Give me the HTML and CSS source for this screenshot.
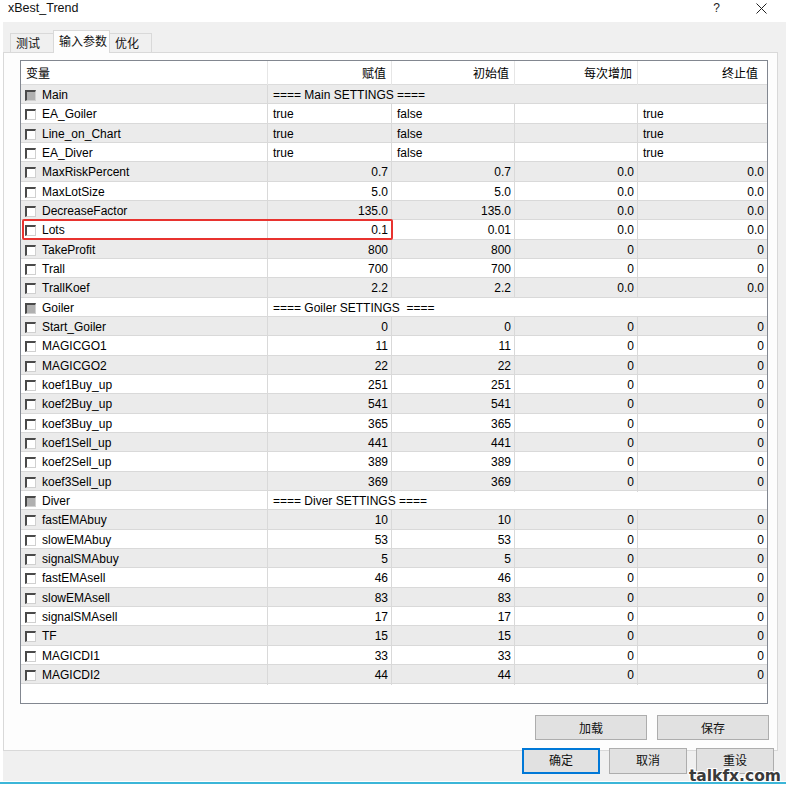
FILE: index.html
```html
<!DOCTYPE html>
<html lang="zh">
<head>
<meta charset="utf-8">
<title>xBest_Trend</title>
<link rel="stylesheet" href="styles.css">
</head>
<body>
<div class="window">
  <div class="titlebar">
    <span class="title">xBest_Trend</span>
    <span class="help">?</span>
    <svg class="close" width="11" height="11" viewBox="0 0 11 11"><path d="M0.5 0.5L10.5 10.5M10.5 0.5L0.5 10.5" stroke="#222" stroke-width="1" fill="none"/></svg>
  </div>
  <div class="client">
    <div class="tabs">
      <div class="tab t1">测试</div>
      <div class="tab active">输入参数</div>
      <div class="tab t3">优化</div>
    </div>
    <div class="panel">
      <div class="table">
        <div class="row head">
          <div class="c l">变量</div><div class="c">赋值</div><div class="c">初始值</div><div class="c">每次增加</div><div class="c last">终止值</div>
        </div>
        <div class="row g group"><div class="c n"><span class="cb"></span>Main</div><div class="c l span">==== Main SETTINGS ====</div></div>
        <div class="row"><div class="c n"><span class="cb"></span>EA_Goiler</div><div class="c l">true</div><div class="c l">false</div><div class="c"></div><div class="c l">true</div></div>
        <div class="row g"><div class="c n"><span class="cb"></span>Line_on_Chart</div><div class="c l">true</div><div class="c l">false</div><div class="c"></div><div class="c l">true</div></div>
        <div class="row"><div class="c n"><span class="cb"></span>EA_Diver</div><div class="c l">true</div><div class="c l">false</div><div class="c"></div><div class="c l">true</div></div>
        <div class="row g"><div class="c n"><span class="cb"></span>MaxRiskPercent</div><div class="c">0.7</div><div class="c">0.7</div><div class="c">0.0</div><div class="c">0.0</div></div>
        <div class="row"><div class="c n"><span class="cb"></span>MaxLotSize</div><div class="c">5.0</div><div class="c">5.0</div><div class="c">0.0</div><div class="c">0.0</div></div>
        <div class="row g"><div class="c n"><span class="cb"></span>DecreaseFactor</div><div class="c">135.0</div><div class="c">135.0</div><div class="c">0.0</div><div class="c">0.0</div></div>
        <div class="row"><div class="c n"><span class="cb"></span>Lots</div><div class="c">0.1</div><div class="c">0.01</div><div class="c">0.0</div><div class="c">0.0</div></div>
        <div class="row g"><div class="c n"><span class="cb"></span>TakeProfit</div><div class="c">800</div><div class="c">800</div><div class="c">0</div><div class="c">0</div></div>
        <div class="row"><div class="c n"><span class="cb"></span>Trall</div><div class="c">700</div><div class="c">700</div><div class="c">0</div><div class="c">0</div></div>
        <div class="row g"><div class="c n"><span class="cb"></span>TrallKoef</div><div class="c">2.2</div><div class="c">2.2</div><div class="c">0.0</div><div class="c">0.0</div></div>
        <div class="row group"><div class="c n"><span class="cb"></span>Goiler</div><div class="c l span">==== Goiler SETTINGS  ====</div></div>
        <div class="row g"><div class="c n"><span class="cb"></span>Start_Goiler</div><div class="c">0</div><div class="c">0</div><div class="c">0</div><div class="c">0</div></div>
        <div class="row"><div class="c n"><span class="cb"></span>MAGICGO1</div><div class="c">11</div><div class="c">11</div><div class="c">0</div><div class="c">0</div></div>
        <div class="row g"><div class="c n"><span class="cb"></span>MAGICGO2</div><div class="c">22</div><div class="c">22</div><div class="c">0</div><div class="c">0</div></div>
        <div class="row"><div class="c n"><span class="cb"></span>koef1Buy_up</div><div class="c">251</div><div class="c">251</div><div class="c">0</div><div class="c">0</div></div>
        <div class="row g"><div class="c n"><span class="cb"></span>koef2Buy_up</div><div class="c">541</div><div class="c">541</div><div class="c">0</div><div class="c">0</div></div>
        <div class="row"><div class="c n"><span class="cb"></span>koef3Buy_up</div><div class="c">365</div><div class="c">365</div><div class="c">0</div><div class="c">0</div></div>
        <div class="row g"><div class="c n"><span class="cb"></span>koef1Sell_up</div><div class="c">441</div><div class="c">441</div><div class="c">0</div><div class="c">0</div></div>
        <div class="row"><div class="c n"><span class="cb"></span>koef2Sell_up</div><div class="c">389</div><div class="c">389</div><div class="c">0</div><div class="c">0</div></div>
        <div class="row g"><div class="c n"><span class="cb"></span>koef3Sell_up</div><div class="c">369</div><div class="c">369</div><div class="c">0</div><div class="c">0</div></div>
        <div class="row group"><div class="c n"><span class="cb"></span>Diver</div><div class="c l span">==== Diver SETTINGS ====</div></div>
        <div class="row g"><div class="c n"><span class="cb"></span>fastEMAbuy</div><div class="c">10</div><div class="c">10</div><div class="c">0</div><div class="c">0</div></div>
        <div class="row"><div class="c n"><span class="cb"></span>slowEMAbuy</div><div class="c">53</div><div class="c">53</div><div class="c">0</div><div class="c">0</div></div>
        <div class="row g"><div class="c n"><span class="cb"></span>signalSMAbuy</div><div class="c">5</div><div class="c">5</div><div class="c">0</div><div class="c">0</div></div>
        <div class="row"><div class="c n"><span class="cb"></span>fastEMAsell</div><div class="c">46</div><div class="c">46</div><div class="c">0</div><div class="c">0</div></div>
        <div class="row g"><div class="c n"><span class="cb"></span>slowEMAsell</div><div class="c">83</div><div class="c">83</div><div class="c">0</div><div class="c">0</div></div>
        <div class="row"><div class="c n"><span class="cb"></span>signalSMAsell</div><div class="c">17</div><div class="c">17</div><div class="c">0</div><div class="c">0</div></div>
        <div class="row g"><div class="c n"><span class="cb"></span>TF</div><div class="c">15</div><div class="c">15</div><div class="c">0</div><div class="c">0</div></div>
        <div class="row"><div class="c n"><span class="cb"></span>MAGICDI1</div><div class="c">33</div><div class="c">33</div><div class="c">0</div><div class="c">0</div></div>
        <div class="row g"><div class="c n"><span class="cb"></span>MAGICDI2</div><div class="c">44</div><div class="c">44</div><div class="c">0</div><div class="c">0</div></div>
        <div class="highlight"></div>
      </div>
      <div class="actions">
        <button class="btn wide">加载</button>
        <button class="btn wide">保存</button>
      </div>
    </div>
    <div class="footer">
      <button class="btn small default">确定</button>
      <button class="btn small">取消</button>
      <button class="btn small">重设</button>
    </div>
  </div>
  <div class="edge"></div>
  <div class="watermark">talkfx.com</div>
</div>
</body>
</html>
```

FILE: styles.css
```css
* { box-sizing: border-box; }

body {
  margin: 0;
  background: #ffffff;
  font-family: "Liberation Sans", "Noto Sans CJK SC", sans-serif;
  font-size: 12px;
  color: #000;
}

.window {
  position: relative;
  width: 786px;
  height: 786px;
  display: flex;
  flex-direction: column;
}

.titlebar {
  height: 22px;
  display: flex;
  align-items: flex-start;
  padding-top: 1px;
  padding-left: 8px;
  padding-right: 19px;
  font-size: 12.5px;
  line-height: 14px;
  color: #111;
}
.title { flex: 1; }
.help { font-size: 12px; color: #222; margin-right: 36px; }
.close { display: block; margin-top: 2px; }

.client {
  flex: 1;
  margin-left: 3px;
  background: #f0f0f0;
  display: flex;
  flex-direction: column;
  padding-top: 8px;
}

.tabs {
  height: 22px;
  display: flex;
  align-items: flex-end;
  padding-left: 7px;
  position: relative;
  z-index: 1;
}
.tab {
  height: 19px;
  border: 1px solid #d9d9d9;
  border-bottom: none;
  background: #f0f0f0;
  font-family: "Noto Sans CJK SC", sans-serif;
  font-size: 12px;
  line-height: 18px;
  padding-left: 5px;
  color: #111;
}
.t1 { width: 43px; border-right: none; }
.t3 { width: 42px; border-left: none; }
.tab.active {
  width: 57px;
  height: 23px;
  margin-bottom: -1px;
  background: #fdfdfd;
  padding-left: 5px;
  line-height: 20px;
}

.panel {
  height: 699px;
  margin-right: 8px;
  border: 1px solid #d9d9d9;
  background: #fdfdfd;
  padding: 7px 8px 0 16px;
}

.table {
  position: relative;
  width: 748px;
  height: 644px;
  border: 1px solid #828790;
  background: #fff;
}

.row {
  display: grid;
  grid-template-columns: 247px 124px 123px 123px 129px;
  height: 19.33px;
  border-bottom: 1px solid #d9d9d9;
}
.row.g { background: #ebebeb; }
.row.head {
  height: 24px;
  background: #fff;
  border-bottom: 1px solid #dcdcdc;
}
.row.head .c {
  border-right-color: #e6e6e6;
  line-height: 24px;
  font-family: "Noto Sans CJK SC", sans-serif;
  padding-right: 5px;
}
.row.head .c.l { padding-left: 5px; }
.row.head .c.last { padding-right: 9px; }

.c {
  border-right: 1px solid #d9d9d9;
  text-align: right;
  padding: 0 3px 0 5px;
  line-height: 20px;
  white-space: pre;
  overflow: visible;
}
.c:last-child { border-right: none; }
.c.l { text-align: left; }
.c.span { grid-column: 2 / -1; }

.c.n {
  display: flex;
  align-items: flex-start;
  text-align: left;
  padding-left: 4px;
}
.cb {
  width: 11px;
  height: 11px;
  margin-top: 5px;
  margin-right: 6px;
  flex: none;
  background: #fff;
  border-top: 2px solid #4a4a4a;
  border-left: 2px solid #4a4a4a;
  border-right: 1px solid #d0d0d0;
  border-bottom: 1px solid #d0d0d0;
}
.group .cb { background: #b0b0b0; }

.highlight {
  position: absolute;
  left: 1px;
  top: 158px;
  width: 371px;
  height: 21px;
  border: 2px solid #e8332f;
  border-radius: 2px;
}

.actions {
  display: flex;
  justify-content: flex-end;
  gap: 10px;
  margin-top: 11px;
}

.btn {
  height: 25px;
  border: 1px solid #adadad;
  background: #e1e1e1;
  font-family: "Noto Sans CJK SC", sans-serif;
  font-size: 12px;
  line-height: 16px;
  color: #111;
  padding: 0;
}
.btn.wide { width: 112px; }
.btn.small { width: 78px; height: 26px; padding-bottom: 3px; }
.btn.default { border: 2px solid #0078d7; }

.footer {
  display: flex;
  justify-content: flex-end;
  gap: 9px;
  margin-top: -3px;
  padding-right: 12px;
}

.edge {
  height: 5px;
  border-top: 1px solid #fff;
  border-bottom: 2px solid #fff;
  background: #3cb6d8;
}

.watermark {
  position: absolute;
  right: 5px;
  bottom: 3px;
  font-family: "DejaVu Sans", sans-serif;
  font-weight: bold;
  font-size: 15.5px;
  line-height: 13px;
  color: #3a3a3a;
  text-shadow: 1px 0 #fff, -1px 0 #fff, 0 1px #fff, 0 -1px #fff, 1px 1px #fff, -1px -1px #fff, 1px -1px #fff, -1px 1px #fff;
}
```
